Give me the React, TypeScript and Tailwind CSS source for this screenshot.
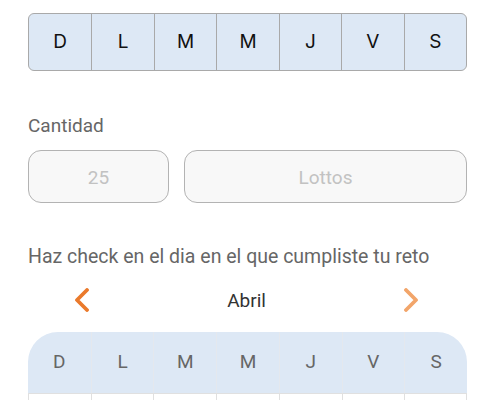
import { useState } from 'react';

const DAYS = ['D', 'L', 'M', 'M', 'J', 'V', 'S'];

export default function App() {
  const [month] = useState('Abril');

  return (
    <div className="w-[495px] h-[400px] overflow-hidden bg-white px-[28px] font-['Roboto',sans-serif]">
      {/* Week selector */}
      <div className="mt-[13px] grid grid-cols-7 h-[58px] border border-[#a9a9a9] rounded-[6px] bg-[#dde8f5] overflow-hidden">
        {DAYS.map((d, i) => (
          <div
            key={i}
            className={`flex items-center justify-center text-[19px] text-[#111] font-['Inter',sans-serif] ${i > 0 ? 'border-l border-[#a9a9a9]' : ''}`}
          >
            {d}
          </div>
        ))}
      </div>

      {/* Cantidad */}
      <p className="mt-[43px] text-[19px] leading-[24px] text-[#666]">Cantidad</p>
      <div className="mt-[12px] flex gap-[15px]">
        <div className="w-[141px] h-[53px] pt-[3px] rounded-[13px] border border-[#b3b3b3] bg-[#f8f8f8] flex items-center justify-center text-[19px] text-[#c2c2c2]">
          25
        </div>
        <div className="flex-1 h-[53px] pt-[3px] rounded-[13px] border border-[#b3b3b3] bg-[#f8f8f8] flex items-center justify-center text-[19px] text-[#c2c2c2]">
          Lottos
        </div>
      </div>

      {/* Calendar */}
      <p className="mt-[42px] text-[19.5px] leading-[24px] text-[#666]">Haz check en el dia en el que cumpliste tu reto</p>
      <div className="mt-[19px] h-[24px] flex items-center justify-between pl-[46px] pr-[48px]">
        <svg width="15" height="24" viewBox="0 0 15 24" fill="none">
          <path d="M13 2 L3 12 L13 22" stroke="#ea7a2c" strokeWidth="3.8" strokeLinecap="round" strokeLinejoin="round" />
        </svg>
        <span className="pt-[2px] text-[19px] text-[#333]">{month}</span>
        <svg width="15" height="24" viewBox="0 0 15 24" fill="none">
          <path d="M2 2 L12 12 L2 22" stroke="#f2a56a" strokeWidth="3.8" strokeLinecap="round" strokeLinejoin="round" />
        </svg>
      </div>

      <div className="mt-[20px] rounded-t-[30px] overflow-hidden">
        <div className="grid grid-cols-7 h-[61px] bg-[#dde8f5]">
          {DAYS.map((d, i) => (
            <div
              key={i}
              className={`flex items-center justify-center text-[19px] text-[#666] ${i > 0 ? 'border-l border-[#e4e8ee]' : ''}`}
            >
              {d}
            </div>
          ))}
        </div>
        <div className="grid grid-cols-7 h-[40px] border-t border-[#e0e0e0]">
          {DAYS.map((_, i) => (
            <div key={i} className={`border-l border-[#e0e0e0] ${i === 6 ? 'border-r' : ''}`} />
          ))}
        </div>
      </div>
    </div>
  );
}
